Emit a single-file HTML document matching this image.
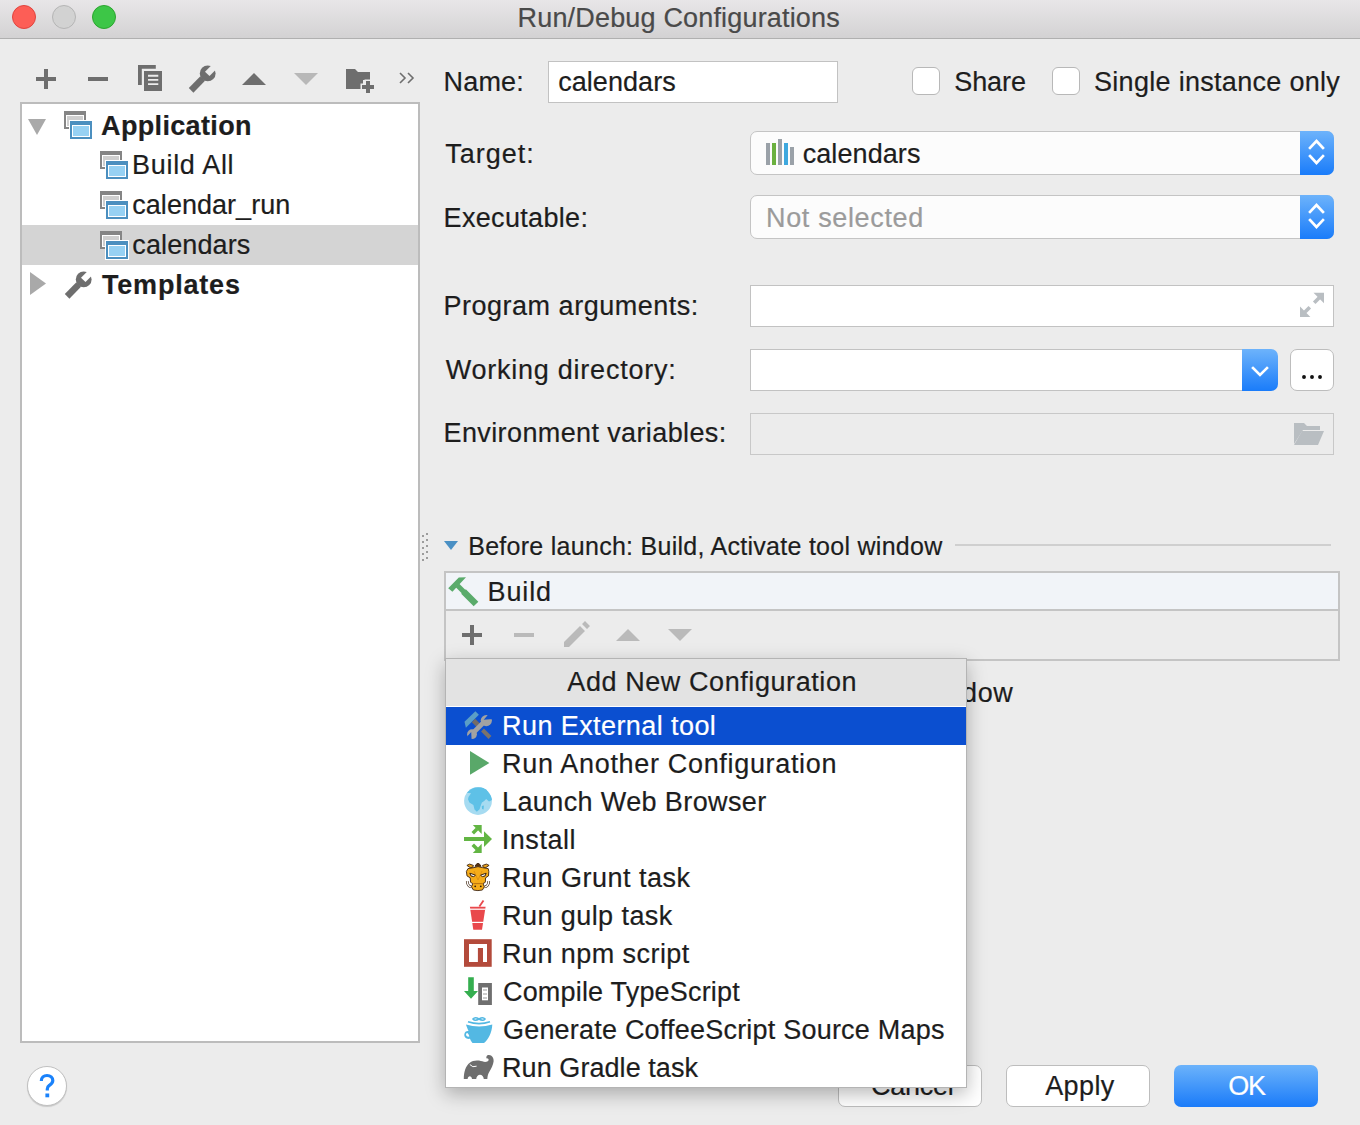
<!DOCTYPE html>
<html><head><meta charset="utf-8">
<style>
html,body{margin:0;padding:0;}
body{width:1360px;height:1125px;overflow:hidden;background:#ececec;position:relative;font-family:"Liberation Sans",sans-serif;color:#1d1d1d;}
.a{position:absolute;}
.t{position:absolute;white-space:nowrap;-webkit-text-stroke:0.2px currentColor;}
svg{position:absolute;overflow:visible;}
.light{position:absolute;top:5px;width:24px;height:24px;border-radius:50%;box-sizing:border-box;}
.field{position:absolute;background:#fff;border:1.5px solid #c2c2c2;box-sizing:border-box;}
.combo{position:absolute;background:#fcfcfc;border:1.5px solid #c4c4c4;border-radius:7px;box-sizing:border-box;}
.bluebtn{position:absolute;background:linear-gradient(#6db3fb,#1a7cfa);border-radius:0 7px 7px 0;}
.cb{position:absolute;width:28px;height:28px;border:1.5px solid #b8b8b8;border-radius:6px;background:#fff;box-sizing:border-box;}
.btn{position:absolute;background:#fff;border:1.5px solid #bdbdbd;border-radius:7px;box-sizing:border-box;}
</style></head>
<body>
<svg width="0" height="0" style="position:absolute">
 <defs>
  
  <mask id="wm" maskUnits="userSpaceOnUse" x="-5" y="-5" width="40" height="40"><rect x="-5" y="-5" width="40" height="40" fill="#fff"/><path d="M16 6.7 L20.5 11.1 L28.5 3.1 L24 -1.3 Z" fill="#000"/></mask>
  
 </defs>
</svg>
<!-- title bar -->
<div class="a" style="left:0;top:0;width:1360px;height:39px;background:linear-gradient(#e8e6e8,#d3d2d3);border-bottom:1.5px solid #b0b0b0;box-sizing:border-box;"></div>
<div class="light" style="left:12px;background:#fd5e56;border:1px solid #e0443e;"></div>
<div class="light" style="left:52px;background:#d2d2d2;border:1px solid #b5b5b5;"></div>
<div class="light" style="left:92px;background:#3dc647;border:1px solid #2ca52f;"></div>

<!-- left toolbar -->
<svg style="left:0;top:0" width="440" height="100">
 <g fill="#6e6e6e">
  <rect x="36" y="77" width="20" height="4"/><rect x="44" y="69" width="4" height="20"/>
  <rect x="88" y="77" width="20" height="4"/>
  <path d="M138 65h17.8v3.8h-14v16.2h-3.8z"/>
  <path d="M144 71h18v20h-18z M148 74.8v1.9h10.3v-1.9z M148 79v1.8h10.3v-1.8z M148 83.2v1.8h10.3v-1.8z" fill-rule="evenodd"/>
  <path d="M242 85 L254 73 L266 85 Z"/>
  <path d="M346 69h9l3 3h12v8h-7v9h-17z"/>
  <path d="M360.5 83.5 h4 v-4 h7 v4 h4 v7 h-4 v4 h-7 v-4 h-4 z" fill="#ececec"/><rect x="362" y="85" width="12" height="4"/><rect x="366" y="81" width="4" height="12"/>
 </g>
 <g transform="translate(189,65)" style="color:#6e6e6e">
   <g fill="currentColor" mask="url(#wm)">
    <path d="M-0.2 23 L4.4 27.7 L16 15.7 L11.1 11.4 Z"/>
    <circle cx="18.7" cy="8.4" r="7.9"/>
   </g>
  </g>
 <path d="M294 73 L318 73 L306 85 Z" fill="#b8b8b8"/>
 <path d="M400 73 l5 5 l-5 5 M408 73 l5 5 l-5 5" fill="none" stroke="#6e6e6e" stroke-width="1.6"/>
</svg>

<!-- tree panel -->
<div class="a" style="left:20px;top:102px;width:400px;height:941px;background:#fff;border:2px solid #bcbcbc;box-sizing:border-box;"></div>
<div class="a" style="left:22px;top:225px;width:396px;height:40px;background:#d4d4d4;"></div>
<svg style="left:0;top:0" width="440" height="320">
 <path d="M28 119 L46 119 L37 135 Z" fill="#a9a9a9"/>
 <path d="M30 272 L46 283.5 L30 295 Z" fill="#a9a9a9"/>
 <g transform="translate(64,111)">
   <rect x="0" y="0" width="22" height="18" fill="#858585"/>
   <rect x="2" y="4" width="18" height="12" fill="#fff"/>
   <rect x="3" y="5" width="16" height="10" fill="#cfcfcf"/>
   <rect x="5" y="9" width="24" height="20" fill="#fff"/>
   <rect x="6" y="10" width="22" height="18" fill="#4b8fbf"/>
   <rect x="8" y="14" width="18" height="12" fill="#fff"/>
   <rect x="9" y="15" width="16" height="10" fill="#97d1f3"/>
  </g>
 <g transform="translate(100,151)">
   <rect x="0" y="0" width="22" height="18" fill="#858585"/>
   <rect x="2" y="4" width="18" height="12" fill="#fff"/>
   <rect x="3" y="5" width="16" height="10" fill="#cfcfcf"/>
   <rect x="5" y="9" width="24" height="20" fill="#fff"/>
   <rect x="6" y="10" width="22" height="18" fill="#4b8fbf"/>
   <rect x="8" y="14" width="18" height="12" fill="#fff"/>
   <rect x="9" y="15" width="16" height="10" fill="#97d1f3"/>
  </g>
 <g transform="translate(100,191)">
   <rect x="0" y="0" width="22" height="18" fill="#858585"/>
   <rect x="2" y="4" width="18" height="12" fill="#fff"/>
   <rect x="3" y="5" width="16" height="10" fill="#cfcfcf"/>
   <rect x="5" y="9" width="24" height="20" fill="#fff"/>
   <rect x="6" y="10" width="22" height="18" fill="#4b8fbf"/>
   <rect x="8" y="14" width="18" height="12" fill="#fff"/>
   <rect x="9" y="15" width="16" height="10" fill="#97d1f3"/>
  </g>
 <g transform="translate(100,231)">
   <rect x="0" y="0" width="22" height="18" fill="#858585"/>
   <rect x="2" y="4" width="18" height="12" fill="#fff"/>
   <rect x="3" y="5" width="16" height="10" fill="#cfcfcf"/>
   <rect x="5" y="9" width="24" height="20" fill="#fff"/>
   <rect x="6" y="10" width="22" height="18" fill="#4b8fbf"/>
   <rect x="8" y="14" width="18" height="12" fill="#fff"/>
   <rect x="9" y="15" width="16" height="10" fill="#97d1f3"/>
  </g>
 <g transform="translate(65,271)" style="color:#6e6e6e">
   <g fill="currentColor" mask="url(#wm)">
    <path d="M-0.2 23 L4.4 27.7 L16 15.7 L11.1 11.4 Z"/>
    <circle cx="18.7" cy="8.4" r="7.9"/>
   </g>
  </g>
</svg>

<!-- form -->
<div class="field" style="left:548px;top:61px;width:290px;height:42px;"></div>
<div class="cb" style="left:912px;top:67px;"></div>
<div class="cb" style="left:1052px;top:67px;"></div>
<div class="combo" style="left:750px;top:131px;width:584px;height:44px;"></div>
<div class="bluebtn" style="left:1300px;top:131px;width:34px;height:44px;"></div>
<div class="combo" style="left:750px;top:195px;width:584px;height:44px;"></div>
<div class="bluebtn" style="left:1300px;top:195px;width:34px;height:44px;"></div>
<div class="field" style="left:750px;top:285px;width:584px;height:42px;"></div>
<div class="field" style="left:750px;top:349px;width:510px;height:42px;"></div>
<div class="a" style="left:1242px;top:349px;width:36px;height:42px;background:linear-gradient(#6db3fb,#1a7cfa);border-radius:0 7px 7px 0;"></div>
<div class="btn" style="left:1290px;top:349px;width:44px;height:42px;"></div>
<div class="field" style="left:750px;top:413px;width:584px;height:42px;background:#ececec;border-color:#c8c8c8;"></div>

<svg style="left:0;top:0" width="1360" height="470">
 <rect x="766" y="143" width="4" height="22" fill="#9aa1a8"/>
 <rect x="772" y="143" width="4" height="22" fill="#6bb13f"/>
 <rect x="778" y="139" width="4" height="26" fill="#9aa1a8"/>
 <rect x="784" y="143" width="4" height="22" fill="#3ea8de"/>
 <rect x="790" y="147" width="4" height="18" fill="#9aa1a8"/>
 <g fill="none" stroke="#fff" stroke-width="2.6" stroke-linecap="square">
  <path d="M1310 148 l6.5 -7 l6.5 7 M1310 156 l6.5 7 l6.5 -7"/>
  <path d="M1310 212 l6.5 -7 l6.5 7 M1310 220 l6.5 7 l6.5 -7"/>
  <path d="M1253 368 l7 7 l7 -7"/>
 </g>
 <circle cx="1304" cy="377" r="1.95" fill="#111"/><circle cx="1312" cy="377" r="1.95" fill="#111"/><circle cx="1320" cy="377" r="1.95" fill="#111"/>
 <g fill="#b9bec2">
    <path d="M1313.5 292.8 L1324 292.8 L1324 303.2 Z"/>
  <path d="M1300 317 L1300 306.6 L1310.4 317 Z"/>
 </g>
 <g stroke="#b9bec2" stroke-width="3.6" fill="none">
  <path d="M1320.5 296.5 L1314.2 302.8"/>
  <path d="M1303.5 313.5 L1309.8 307.2"/>
 </g>
 <g fill="#b9bec2">
  <path d="M1294 423 h10 l3 3 h13 v4 h-17 l-9 14 z"/>
  <path d="M1302 431 h22 l-6 14 h-24 z"/>
 </g>
</svg>

<!-- before launch -->
<svg style="left:0;top:520px" width="1360" height="150">
 <g fill="#9c9c9c"><rect x="422" y="15" width="2" height="2"/><rect x="426" y="13" width="2" height="2"/><rect x="422" y="21" width="2" height="2"/><rect x="426" y="19" width="2" height="2"/><rect x="422" y="27" width="2" height="2"/><rect x="426" y="25" width="2" height="2"/><rect x="422" y="33" width="2" height="2"/><rect x="426" y="31" width="2" height="2"/><rect x="422" y="39" width="2" height="2"/><rect x="426" y="37" width="2" height="2"/></g>
 <path d="M444 21 L458 21 L451 30 Z" fill="#4a90c4"/>
 <rect x="955" y="24" width="376" height="2" fill="#cfcfcf"/>
</svg>
<div class="a" style="left:444px;top:571px;width:896px;height:90px;border:2px solid #c4c4c4;box-sizing:border-box;background:#ececec;"></div>
<div class="a" style="left:446px;top:573px;width:892px;height:36px;background:#f1f4f8;border-bottom:2px solid #c4c4c4;"></div>
<svg style="left:0;top:0" width="1360" height="700">
 <path d="M448.2 588.3 L458.8 577.6 L466 577.3 L460.6 583 L452.4 591.8 Z" fill="#5aab6b"/><path d="M457.5 585.5 L464.5 592.5" stroke="#5aab6b" stroke-width="5" fill="none"/><path d="M463.5 591.5 L476 604" stroke="#5aab6b" stroke-width="6.6" fill="none"/>
 <g fill="#6e6e6e"><rect x="462" y="633" width="20" height="4"/><rect x="470" y="625" width="4" height="20"/></g>
 <g fill="#bababa">
  <rect x="514" y="633" width="20" height="4"/>
  <path d="M564 642 l16 -16 l5 5 l-16 16 h-5 z M582 624 l3 -3 l5 5 l-3 3 z"/>
  <path d="M616 641 l12 -12 l12 12 z"/>
  <path d="M668 629 h24 l-12 12 z"/>
 </g>
</svg>

<!-- bottom buttons -->
<div class="a" style="left:27px;top:1066px;width:40px;height:40px;border-radius:50%;background:#fff;border:1px solid #c0c0c0;box-sizing:border-box;box-shadow:0 1px 1px rgba(0,0,0,0.15);"></div>
<div class="btn" style="left:838px;top:1065px;width:144px;height:42px;"></div>
<div class="btn" style="left:1006px;top:1065px;width:144px;height:42px;"></div>
<div class="a" style="left:1174px;top:1065px;width:144px;height:42px;border-radius:7px;background:linear-gradient(#6cb3fb,#1a7bf9);"></div>
<svg style="left:0;top:0" width="100" height="1125">
 <path d="M41.3 1081 C41.3 1077.3 43.8 1075.5 47 1075.5 C50.5 1075.5 52.8 1077.5 52.8 1080.6 C52.8 1083.2 51 1084.3 49.3 1085.4 C48 1086.3 47.3 1087 47.3 1089 V1090.5" fill="none" stroke="#1a82fb" stroke-width="3.2"/>
 <rect x="45.4" y="1093.5" width="3.8" height="3.8" fill="#1a82fb"/>
</svg>

<div class="t" style="left:517.57px;top:4.94px;font-size:27.00px;line-height:27.00px;letter-spacing:0.173px;color:#4a4a4a;">Run/Debug Configurations</div>
<div class="t" style="left:101.12px;top:112.94px;font-size:27.00px;line-height:27.00px;letter-spacing:0.335px;font-weight:bold;">Application</div>
<div class="t" style="left:132.07px;top:151.94px;font-size:27.00px;line-height:27.00px;letter-spacing:0.687px;">Build All</div>
<div class="t" style="left:132.25px;top:191.94px;font-size:27.00px;line-height:27.00px;letter-spacing:0.038px;">calendar_run</div>
<div class="t" style="left:132.25px;top:231.94px;font-size:27.00px;line-height:27.00px;letter-spacing:0.131px;">calendars</div>
<div class="t" style="left:102.03px;top:271.94px;font-size:27.00px;line-height:27.00px;letter-spacing:0.795px;font-weight:bold;">Templates</div>
<div class="t" style="left:443.57px;top:68.94px;font-size:27.00px;line-height:27.00px;letter-spacing:0.161px;">Name:</div>
<div class="t" style="left:558.15px;top:68.94px;font-size:27.00px;line-height:27.00px;letter-spacing:0.068px;">calendars</div>
<div class="t" style="left:954.28px;top:68.94px;font-size:27.00px;line-height:27.00px;letter-spacing:-0.090px;">Share</div>
<div class="t" style="left:1093.99px;top:68.94px;font-size:27.00px;line-height:27.00px;letter-spacing:0.301px;">Single instance only</div>
<div class="t" style="left:445.19px;top:140.94px;font-size:27.00px;line-height:27.00px;letter-spacing:1.014px;">Target:</div>
<div class="t" style="left:802.65px;top:141.34px;font-size:27.00px;line-height:27.00px;letter-spacing:0.093px;">calendars</div>
<div class="t" style="left:443.57px;top:204.94px;font-size:27.00px;line-height:27.00px;letter-spacing:0.328px;">Executable:</div>
<div class="t" style="left:766.07px;top:204.94px;font-size:27.00px;line-height:27.00px;letter-spacing:0.642px;color:#9b9b9b;">Not selected</div>
<div class="t" style="left:443.57px;top:292.94px;font-size:27.00px;line-height:27.00px;letter-spacing:0.503px;">Program arguments:</div>
<div class="t" style="left:445.67px;top:356.94px;font-size:27.00px;line-height:27.00px;letter-spacing:0.764px;">Working directory:</div>
<div class="t" style="left:443.57px;top:420.44px;font-size:27.00px;line-height:27.00px;letter-spacing:0.381px;">Environment variables:</div>
<div class="t" style="left:468.24px;top:533.64px;font-size:25.00px;line-height:25.00px;letter-spacing:0.275px;">Before launch: Build, Activate tool window</div>
<div class="t" style="left:487.57px;top:578.94px;font-size:27.00px;line-height:27.00px;letter-spacing:0.877px;">Build</div>
<div class="t" style="left:757.66px;top:680.34px;font-size:27.00px;line-height:27.00px;letter-spacing:0.550px;">Activate tool window</div>
<div class="t" style="left:871.05px;top:1072.54px;font-size:27.00px;line-height:27.00px;letter-spacing:-0.293px;">Cancel</div>
<div class="t" style="left:1045.23px;top:1073.44px;font-size:27.00px;line-height:27.00px;letter-spacing:0.392px;">Apply</div>
<div class="t" style="left:1228.32px;top:1073.44px;font-size:27.00px;line-height:27.00px;letter-spacing:-1.395px;color:#fff;">OK</div>


<!-- popup -->
<div class="a" style="left:445px;top:658px;width:522px;height:430px;background:#fff;border:1px solid #b4b4b4;box-sizing:border-box;box-shadow:0 6px 18px rgba(0,0,0,0.28);"></div>
<div class="a" style="left:446px;top:659px;width:520px;height:47px;background:#e3e3e3;"></div>
<div class="a" style="left:446px;top:707px;width:520px;height:38px;background:#0b4fd0;"></div>
<svg style="left:0;top:0" width="1000" height="1100">
 <!-- run external tool -->
 <mask id="jm" maskUnits="userSpaceOnUse" x="455" y="700" width="50" height="50"><rect x="455" y="700" width="50" height="50" fill="#fff"/><path d="M483.7 719.8 L491.3 711 L499.7 718.6 Z M471.2 732 L464 740 L472 748 Z" fill="#000"/></mask>
 <path d="M464.5 721.8 L475.4 711.2 L478.9 714.7 L465.9 727.8 Z" fill="#5b9ec6"/>
 <path d="M473.5 720.5 L478 725" stroke="#736c66" stroke-width="4.6"/>
 <path d="M482.5 730 L490 737.5" stroke="#7a736c" stroke-width="4"/>
 <g fill="#a2a2a2" mask="url(#jm)">
  <path d="M473 733 L486 720" stroke="#a2a2a2" stroke-width="4.6"/>
  <circle cx="486.3" cy="720.6" r="5.6"/>
  <circle cx="472" cy="734.2" r="4.9"/>
 </g>
 <!-- play -->
 <path d="M470 751 L489.4 763 L470 774.8 Z" fill="#59a869"/>
 <!-- globe -->
 <clipPath id="gclip"><circle cx="478" cy="801" r="14"/></clipPath>
 <circle cx="478" cy="801" r="13.9" fill="#a6dbf1"/>
 <path clip-path="url(#gclip)" fill="#5ec1e7" d="M466.8 792.7 L470.5 789.5 L474.8 787.6 L481.9 787.3 L486.2 789.3 L490.4 795 L492.5 799.8 L489 801.5 L486.2 798.9 L484.2 801 L481.9 802.6 L480.8 805.5 L479.6 809.2 L476.8 811.7 L474.5 809.5 L473.4 804.9 L469.4 802.6 L468 799.2 L468.5 797 L471.1 793.2 Z M481.8 806 L483.9 805.5 L483.6 809.5 L482 809 Z"/>
 <!-- install -->
 <g fill="#62b543">
  <rect x="464" y="837" width="21" height="4"/>
  <path d="M484 831.2 L492 839 L484 847 Z"/>
  <path d="M472.8 824.9 H481.7 V834 Z"/><path d="M471.5 832 L476 827.5 L478.5 830 L474 834.5 Z"/>
  <path d="M472.8 852.9 H481.7 V843.7 Z"/><path d="M471.5 846 L476 850.5 L478.5 848 L474 843.5 Z"/>
 </g>
 <!-- grunt -->
 <g stroke="#3d2410" stroke-width="0.9" stroke-linejoin="round">
  <path d="M466.9 865.4 L469.6 864.1 L473.4 865.4 L472.8 867.3 L470.2 867.6 Z M489.1 865.4 L486.4 864.1 L482.6 865.4 L483.2 867.3 L485.8 867.6 Z" fill="#e9a21a"/>
  <path d="M475 866.3 L476 864.5 L478 863.2 L480 864.5 L481 866.3 Z" fill="#5a3412"/>
  <path d="M467.2 881 Q467.5 886.5 471.5 887 M488.8 881 Q488.5 886.5 484.5 887" fill="none" stroke="#3d2410" stroke-width="2.6"/>
  <path d="M467.2 881 Q467.5 886.5 471.5 887 M488.8 881 Q488.5 886.5 484.5 887" fill="none" stroke="#fff" stroke-width="1.3"/>
  <path d="M468 868.6 L474 867.6 L478 866.6 L482.4 867.6 L488.2 868.6 L488.8 871.4 L488.5 875.9 L485.6 877.8 L485.3 882.3 L483 883.6 L484.3 886.8 L482.4 890 L477.9 890.6 L473.4 890 L471.5 886.8 L472.8 883.6 L470.6 882.3 L470.2 877.8 L467 875.9 L466.4 871.4 Z" fill="#f5ac1a"/>
  <path d="M469.8 873.2 L475.8 875.2 L473.5 876.6 L471 876 Z M486.2 873.2 L480.2 875.2 L482.5 876.6 L485 876 Z" fill="#f4f8fb" stroke-width="1"/>
 </g>
 <path d="M473.5 883.6 H482.5" stroke="#b36a10" stroke-width="0.9"/>
 <circle cx="475.2" cy="886.3" r="0.9" fill="#2a1a0a"/><circle cx="480.8" cy="886.3" r="0.9" fill="#2a1a0a"/>
 <path d="M474 871 L478 880 L482 871" stroke="#d88a12" stroke-width="0.8" fill="none"/>
 <!-- gulp -->
 <path d="M469.9 906.8 H485.6 L482 929.8 H473.3 Z" fill="#e9484c"/>
 <path d="M479.4 906.5 L483.5 900.6" stroke="#e9484c" stroke-width="1.8"/>
 <rect x="470" y="908.6" width="15.6" height="1.2" fill="#fff"/>
 <rect x="471.5" y="921.8" width="12.5" height="1.2" fill="#fff"/>
 <!-- npm -->
 <rect x="464" y="939.2" width="27.7" height="27.6" fill="#b34a3b"/>
 <rect x="469" y="944" width="18" height="18" fill="#fff"/>
 <rect x="477.9" y="948" width="5.1" height="14" fill="#b34a3b"/>
 <!-- typescript -->
 <path d="M468.2 977.3 H473.8 V991 H478 L471 998.8 L464 991 H468.2 Z" fill="#35ae4f"/>
 <rect x="478.2" y="983" width="13.7" height="22" fill="#6f6f6f"/>
 <rect x="482" y="987.5" width="6" height="12.8" fill="#fff"/>
 <path d="M483 990 h4 M483 994 h4 M483 998 h4" stroke="#999" stroke-width="1"/>
 <!-- coffee -->
 <path fill="#53b8e3" fill-rule="evenodd" d="M466 1024.5 Q479 1028.5 492.3 1024.5 C492 1033 488 1040 484 1043 H472.5 C471 1041.5 470.5 1040 470 1038.8 C466 1039.5 464 1037 464.3 1034.5 C464.5 1031.5 467 1030.5 468.5 1031 C467.5 1028.5 466.5 1026.5 466 1024.5 Z M467.3 1033 C466 1033 465.8 1034.5 466.3 1035.5 C467 1036.8 468.5 1036.8 469.4 1036.5 C469 1035.2 468.5 1033.8 467.3 1033 Z"/>
 <path d="M468 1021.8 Q479 1025.5 490 1021.8" stroke="#53b8e3" stroke-width="1.7" fill="none"/>
 <path d="M473 1019 Q475 1016.5 479 1019 Q483 1021.5 485 1019 Q483 1016.5 479 1019 Q475 1021.5 473 1019 Z" stroke="#53b8e3" stroke-width="1.6" fill="none"/>
 <!-- gradle -->
 <path fill="#6e6e6e" d="M463.8 1079 C463.8 1072 465.5 1066 469.8 1062.7 C472 1060.8 476 1060 479 1060.6 C482 1061.2 484 1062.2 486.5 1061.8 C488.5 1061.4 489.2 1059.8 488.2 1058.8 C487.4 1058.2 486.3 1058.6 486.3 1057.4 C486.5 1055.6 487.5 1055 489 1055 C492 1055.2 494 1058 493.6 1061.5 C493.2 1065 491.2 1068.5 489.5 1071.5 C488 1074 487.5 1076 487.3 1079 L483.8 1079 C483.5 1076.5 482 1074.7 480 1074.7 C478 1074.7 476.5 1076.5 476.2 1079 L472 1079 C471.8 1077.3 470.8 1076.3 469.8 1076.3 C468.8 1076.3 467.8 1077.3 467.6 1079 Z"/>
 <path d="M469.8 1064.5 Q472.5 1068 476.6 1066.2" stroke="#fff" stroke-width="1" fill="none"/>
</svg>
<div class="t" style="left:567.33px;top:668.94px;font-size:27.00px;line-height:27.00px;letter-spacing:0.576px;">Add New Configuration</div>
<div class="t" style="left:502.07px;top:712.94px;font-size:27.00px;line-height:27.00px;letter-spacing:0.418px;color:#fff;">Run External tool</div>
<div class="t" style="left:502.07px;top:750.94px;font-size:27.00px;line-height:27.00px;letter-spacing:0.676px;">Run Another Configuration</div>
<div class="t" style="left:502.07px;top:788.94px;font-size:27.00px;line-height:27.00px;letter-spacing:0.381px;">Launch Web Browser</div>
<div class="t" style="left:501.80px;top:826.94px;font-size:27.00px;line-height:27.00px;letter-spacing:0.530px;">Install</div>
<div class="t" style="left:502.07px;top:864.94px;font-size:27.00px;line-height:27.00px;letter-spacing:0.496px;">Run Grunt task</div>
<div class="t" style="left:502.07px;top:902.94px;font-size:27.00px;line-height:27.00px;letter-spacing:0.427px;">Run gulp task</div>
<div class="t" style="left:502.07px;top:940.94px;font-size:27.00px;line-height:27.00px;letter-spacing:0.435px;">Run npm script</div>
<div class="t" style="left:502.95px;top:978.94px;font-size:27.00px;line-height:27.00px;letter-spacing:0.190px;">Compile TypeScript</div>
<div class="t" style="left:502.95px;top:1016.94px;font-size:27.00px;line-height:27.00px;letter-spacing:0.210px;">Generate CoffeeScript Source Maps</div>
<div class="t" style="left:502.07px;top:1054.94px;font-size:27.00px;line-height:27.00px;letter-spacing:0.061px;">Run Gradle task</div>

</body></html>
